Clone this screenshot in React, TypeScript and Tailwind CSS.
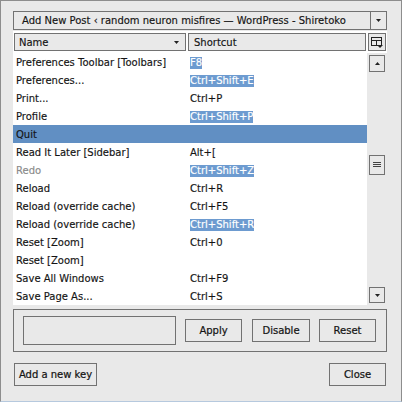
import React from 'react'

type Row = { name: string; key: string; sel?: boolean; dim?: boolean; active?: boolean }

const rows: Row[] = [
  { name: 'Preferences Toolbar [Toolbars]', key: 'F8', sel: true },
  { name: 'Preferences...', key: 'Ctrl+Shift+E', sel: true },
  { name: 'Print...', key: 'Ctrl+P' },
  { name: 'Profile', key: 'Ctrl+Shift+P', sel: true },
  { name: 'Quit', key: '', active: true },
  { name: 'Read It Later [Sidebar]', key: 'Alt+[' },
  { name: 'Redo', key: 'Ctrl+Shift+Z', sel: true, dim: true },
  { name: 'Reload', key: 'Ctrl+R' },
  { name: 'Reload (override cache)', key: 'Ctrl+F5' },
  { name: 'Reload (override cache)', key: 'Ctrl+Shift+R', sel: true },
  { name: 'Reset [Zoom]', key: 'Ctrl+0' },
  { name: 'Reset [Zoom]', key: '' },
  { name: 'Save All Windows', key: 'Ctrl+F9' },
  { name: 'Save Page As...', key: 'Ctrl+S' },
]

function Arrow({ up }: { up?: boolean }) {
  return (
    <svg width="5" height="3" viewBox="0 0 5 3">
      <path d={up ? 'M2.5 0 L5 3 L0 3 Z' : 'M0 0 L5 0 L2.5 3 Z'} fill="#222" />
    </svg>
  )
}

function Btn({ children, w }: { children: React.ReactNode; w: string }) {
  return (
    <button className={`${w} h-[23px] border border-[#727272] bg-[#e9e9e9] text-[10px] text-[#141414] flex items-center justify-center [-webkit-text-stroke:0.22px_#141414]`}>
      {children}
    </button>
  )
}

export default function App() {
  return (
    <div
      className="w-[402px] h-[402px] border border-[#8d8d8d] border-b-[#b6c9de] bg-[#e9e9e9] pl-[12px] pr-[14px] pt-[10px] text-[#141414] text-[10px] [-webkit-text-stroke:0.15px]"
      style={{ fontFamily: '"DejaVu Sans", Verdana, sans-serif' }}
    >
      {/* window picker */}
      <div className="h-[19px] border border-[#727272] flex">
        <div className="flex-1 pl-[8px] flex items-center leading-none whitespace-nowrap overflow-hidden">
          Add New Post ‹ random neuron misfires — WordPress - Shiretoko
        </div>
        <div className="w-[16px] border-l border-[#727272] flex items-center justify-center">
          <Arrow />
        </div>
      </div>

      {/* table */}
      <div className="mt-[1px]">
        <div className="h-[22px] bg-white flex pt-[2px]">
          <div className="ml-[1px] w-[172px] h-[18px] border border-[#727272] bg-[#e9e9e9] flex items-center pl-[4px] pr-[6px]">
            <span className="flex-1">Name</span>
            <Arrow />
          </div>
          <div className="ml-[2px] w-[178px] h-[18px] border border-[#727272] bg-[#e9e9e9] flex items-center pl-[5px]">
            Shortcut
          </div>
          <div className="ml-[2px] w-[18px] h-[18px] border border-[#727272] bg-[#e9e9e9] flex items-center justify-center">
            <svg width="12" height="11" viewBox="0 0 12 11">
              <rect x="0.5" y="0.5" width="10" height="8" fill="none" stroke="#222" />
              <path d="M0.5 3.5 H10.5 M5.5 3.5 V8.5" stroke="#222" />
              <path d="M6 8 H12 L9 11 Z" fill="#222" />
            </svg>
          </div>
        </div>
        <div className="flex h-[252px]">
          <div className="w-[354px] bg-white">
            {rows.map((r, i) => (
              <div
                key={i}
                className={`h-[18px] flex items-center whitespace-nowrap ${r.active ? 'bg-[#618fc3]' : ''}`}
              >
                <div className={`w-[177px] pl-[3px] ${r.dim ? 'text-[#8a8a8a]' : ''}`}>
                  {r.name}
                </div>
                <div>
                  {r.key && (
                    <span className={`leading-[12px] inline-block ${r.sel ? 'bg-[#6d9bd0] text-white' : ''}`}>
                      {r.key}
                    </span>
                  )}
                </div>
              </div>
            ))}
          </div>
          <div className="w-[20px] flex flex-col items-center pt-[2px] pb-[2px]">
            <div className="w-[16px] h-[17px] border border-[#727272] flex items-center justify-center">
              <Arrow up />
            </div>
            <div className="mt-[83px] w-[16px] h-[20px] border border-[#727272] flex items-center justify-center">
              <svg width="8" height="6" viewBox="0 0 8 6">
                <path d="M0 0.5 H8 M0 2.5 H8 M0 4.5 H8" stroke="#444" />
              </svg>
            </div>
            <div className="flex-1" />
            <div className="w-[16px] h-[16px] border border-[#727272] flex items-center justify-center">
              <Arrow />
            </div>
          </div>
        </div>
      </div>

      {/* editor group */}
      <div className="mt-[4px] h-[43px] border border-[#727272] flex items-center pl-[9px]">
        <div className="w-[153px] h-[29px] border border-[#727272]" />
        <div className="ml-[9px]">
          <Btn w="w-[57px]">Apply</Btn>
        </div>
        <div className="ml-[10px]">
          <Btn w="w-[58px]">Disable</Btn>
        </div>
        <div className="ml-[9px]">
          <Btn w="w-[57px]">Reset</Btn>
        </div>
      </div>

      {/* footer */}
      <div className="mt-[11px] flex justify-between px-[1px]">
        <Btn w="w-[83px]">Add a new key</Btn>
        <Btn w="w-[57px]">Close</Btn>
      </div>
    </div>
  )
}
